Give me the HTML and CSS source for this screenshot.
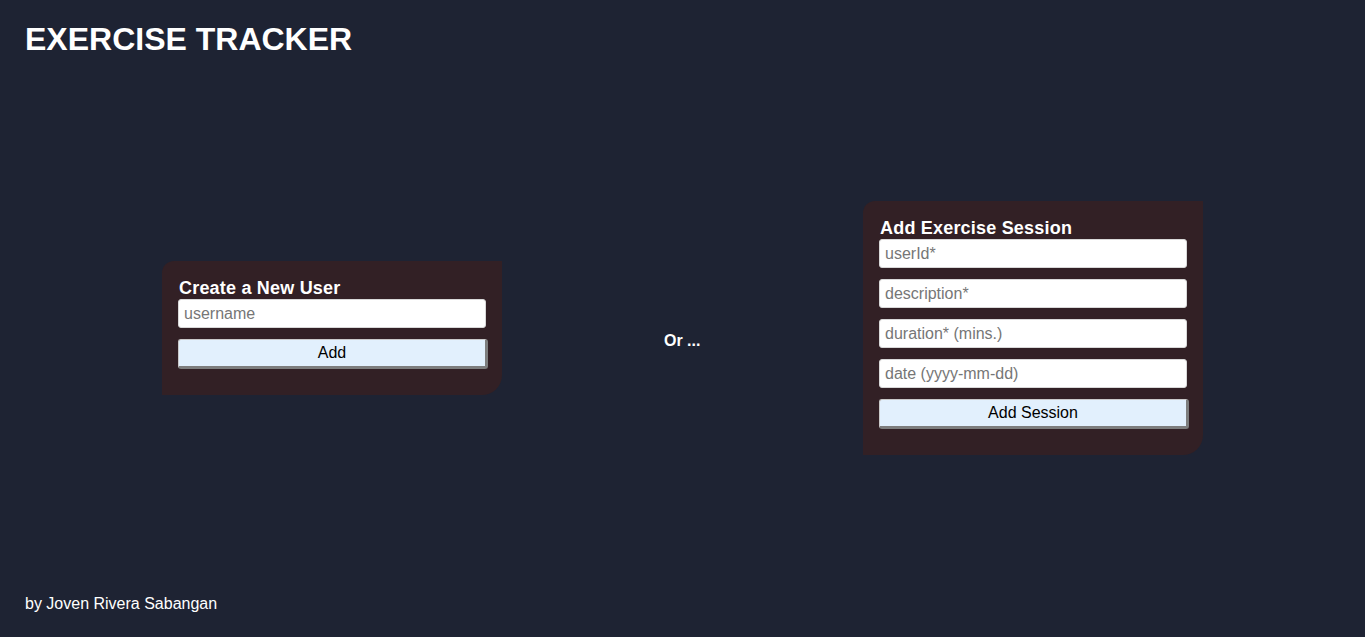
FILE: index.html
```html
<!DOCTYPE html>
<html lang="en">
<head>
<meta charset="utf-8">
<title>Exercise Tracker</title>
<link rel="stylesheet" href="styles.css">
</head>
<body>
<div class="page">
  <header class="header">
    <h1 class="title">EXERCISE TRACKER</h1>
  </header>
  <main class="main">
    <form class="card">
      <h3 class="card-title">Create a New User</h3>
      <input class="field" type="text" placeholder="username">
      <button class="btn" type="button">Add</button>
    </form>
    <p class="or">Or ...</p>
    <form class="card">
      <h3 class="card-title">Add Exercise Session</h3>
      <input class="field" type="text" placeholder="userId*">
      <input class="field" type="text" placeholder="description*">
      <input class="field" type="text" placeholder="duration* (mins.)">
      <input class="field" type="text" placeholder="date (yyyy-mm-dd)">
      <button class="btn" type="button">Add Session</button>
    </form>
  </main>
  <footer class="footer">by Joven Rivera Sabangan</footer>
</div>
</body>
</html>
```

FILE: styles.css
```css
* { box-sizing: border-box; }
html, body { margin: 0; padding: 0; }
body {
  background: #1e2333;
  color: #ffffff;
  font-family: "Liberation Sans", Arial, sans-serif;
}
.page {
  display: flex;
  flex-direction: column;
  height: 637px;
}
.header {
  padding: 21px 24px 0 25px;
}
.title {
  margin: 0;
  font-size: 32px;
  font-weight: bold;
  line-height: 37px;
}
.main {
  flex: 1;
  display: flex;
  justify-content: space-evenly;
  align-items: center;
  padding-top: 2px;
}
.card {
  width: 340px;
  background: #322025;
  border-radius: 12px 0 20px 0;
  padding: 17px 16px 26px 16px;
  display: flex;
  flex-direction: column;
  gap: 11px;
}
.card-title {
  margin: 0 0 -11px 1px;
  font-size: 18px;
  font-weight: bold;
  line-height: 21px;
  letter-spacing: 0.2px;
}
.field {
  height: 29px;
  width: 308px;
  border: 1px solid #d8d8d8;
  border-radius: 3px;
  background: #ffffff;
  padding: 2px 5px 0 5px;
  font-family: "Liberation Sans", Arial, sans-serif;
  font-size: 16px;
  color: #222;
}
.field::placeholder { color: #767676; }
.btn {
  height: 30px;
  width: 310px;
  background: #e2f0fd;
  border: 1px solid #c9c9c9;
  border-right: 3px solid #7d7d7d;
  border-bottom: 3px solid #7d7d7d;
  border-radius: 3px;
  font-family: "Liberation Sans", Arial, sans-serif;
  font-size: 16px;
  color: #000;
  padding: 1px 0 0 0;
}
.or {
  margin: 0;
  padding-top: 26px;
  font-size: 16px;
  font-weight: bold;
  width: 37px;
  white-space: nowrap;
}
.footer {
  padding: 0 24px 24px 25px;
  font-size: 16px;
  line-height: 18px;
}
```
